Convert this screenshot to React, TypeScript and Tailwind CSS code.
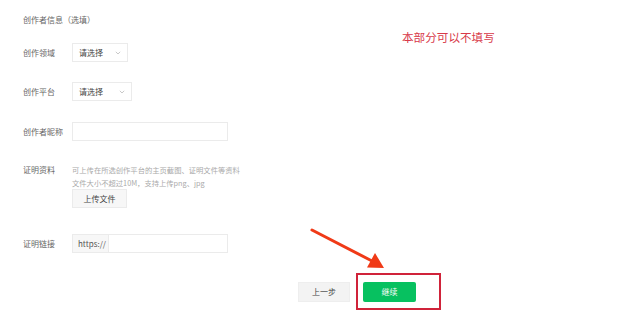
import React from "react";

const font = { fontFamily: '"Noto Sans CJK SC", "Noto Sans", sans-serif' };

function Chevron() {
  return (
    <svg width="6" height="4" viewBox="0 0 6 4" className="shrink-0">
      <path d="M0.8 0.8 L3 3 L5.2 0.8" fill="none" stroke="#bbb" strokeWidth="0.8" />
    </svg>
  );
}

function Select({ w }: { w: string }) {
  return (
    <div className={`${w} h-[19px] border border-[#ebebeb] bg-white flex items-center justify-between pl-[6px] pr-[6px] text-[8px] text-[#444]`}>
      <span>请选择</span>
      <Chevron />
    </div>
  );
}

function Label({ children }: { children: React.ReactNode }) {
  return <div className="w-[49px] shrink-0 text-[8px] text-[#666] leading-[12px]">{children}</div>;
}

export default function App() {
  return (
    <div className="relative w-[640px] h-[320px] bg-white overflow-hidden" style={font}>
      <div className="flex flex-col pl-[23px] pt-[14px]">
        <div className="text-[8px] leading-[12px] text-[#666]">创作者信息（选填）</div>

        <div className="mt-[17px] flex items-center">
          <Label>创作领域</Label>
          <Select w="w-[56px]" />
        </div>

        <div className="mt-[20px] flex items-center">
          <Label>创作平台</Label>
          <Select w="w-[60px]" />
        </div>

        <div className="mt-[21px] flex items-center">
          <Label>创作者昵称</Label>
          <div className="w-[156px] h-[19px] border border-[#ebebeb] bg-white" />
        </div>

        <div className="mt-[23px] flex items-start">
          <Label>证明资料</Label>
          <div className="flex flex-col">
            <div className="text-[7.3px] leading-[12px] text-[#aaa] whitespace-nowrap">可上传在所选创作平台的主页截图、证明文件等资料</div>
            <div className="mt-[1px] text-[7.3px] leading-[12px] text-[#aaa] whitespace-nowrap">文件大小不超过10M，支持上传png、jpg</div>
            <div className="w-[55px] h-[19px] border border-[#ebebeb] bg-[#f7f7f7] flex items-center justify-center text-[8px] text-[#444]">上传文件</div>
          </div>
        </div>

        <div className="mt-[26px] flex items-center">
          <Label>证明链接</Label>
          <div className="w-[156px] h-[19px] border border-[#ebebeb] bg-white flex">
            <div className="w-[36px] h-full bg-[#f7f7f7] border-r border-[#ebebeb] flex items-center pl-[5px] text-[8px] text-[#555]">https://</div>
          </div>
        </div>

        <div className="mt-[29px] flex items-center pl-[275px] gap-[13px]">
          <div className="w-[52px] h-[20px] bg-[#f3f3f3] border border-[#eeeeee] flex items-center justify-center text-[8px] text-[#444]">上一步</div>
          <div className="w-[53px] h-[20px] rounded-[2px] bg-[#07c160] flex items-center justify-center text-[8px] text-white">继续</div>
        </div>
      </div>

      <div className="absolute left-[402px] top-[29px] text-[11.6px] leading-[16px] text-[#d83a4a] whitespace-nowrap">本部分可以不填写</div>

      <div className="absolute left-[356px] top-[273px] w-[85px] h-[37px] border-2 border-[#d0233a]" />

      <svg className="absolute left-0 top-0" width="640" height="320" viewBox="0 0 640 320">
        <line x1="312" y1="230" x2="372" y2="261" stroke="#f03a17" strokeWidth="3" strokeLinecap="round" />
        <polygon points="384,268 367,267.5 375,253" fill="#f03a17" />
      </svg>
    </div>
  );
}
